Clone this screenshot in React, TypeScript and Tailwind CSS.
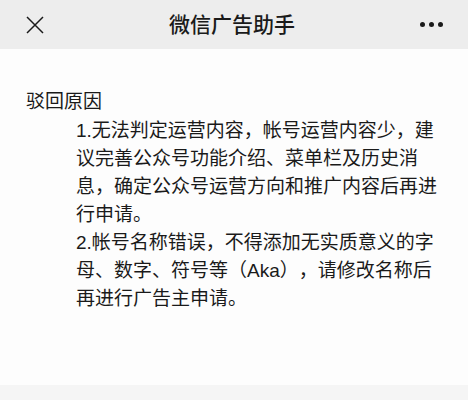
const reasons = [
  "1.无法判定运营内容，帐号运营内容少，建议完善公众号功能介绍、菜单栏及历史消息，确定公众号运营方向和推广内容后再进行申请。",
  "2.帐号名称错误，不得添加无实质意义的字母、数字、符号等（Aka），请修改名称后再进行广告主申请。",
];

function CloseIcon() {
  return (
    <svg width="18" height="18" viewBox="0 0 18 18" fill="none" stroke="#1a1a1a" strokeWidth="1.5">
      <path d="M1 1 L17 17 M17 1 L1 17" />
    </svg>
  );
}

function MoreIcon() {
  return (
    <div className="flex items-center gap-[4px]">
      <span className="h-[5px] w-[5px] rounded-full bg-[#1a1a1a]" />
      <span className="h-[5px] w-[5px] rounded-full bg-[#1a1a1a]" />
      <span className="h-[5px] w-[5px] rounded-full bg-[#1a1a1a]" />
    </div>
  );
}

export default function App() {
  return (
    <div
      className="flex h-[400px] w-[468px] flex-col bg-[#fdfdfd] text-[#1a1a1a]"
      style={{ fontFamily: '"Liberation Sans", "Noto Sans CJK SC", sans-serif' }}
    >
      <header className="flex h-[49px] shrink-0 items-center justify-between bg-[#ededed] pl-[26px] pr-[25px]">
        <CloseIcon />
        <h1 className="text-[21px] font-medium">微信广告助手</h1>
        <MoreIcon />
      </header>

      <main className="flex-1 pt-[41px]">
        <h2 className="pl-[26px] text-[19px] leading-[24px]">驳回原因</h2>
        <div className="mt-[3px] w-[438px] pl-[76px] text-[19px] leading-[28px] [text-spacing-trim:space-all]">
          {reasons.map((r) => (
            <p key={r}>{r}</p>
          ))}
        </div>
      </main>

      <footer className="h-[15px] shrink-0 bg-[#f5f5f5]" />
    </div>
  );
}
